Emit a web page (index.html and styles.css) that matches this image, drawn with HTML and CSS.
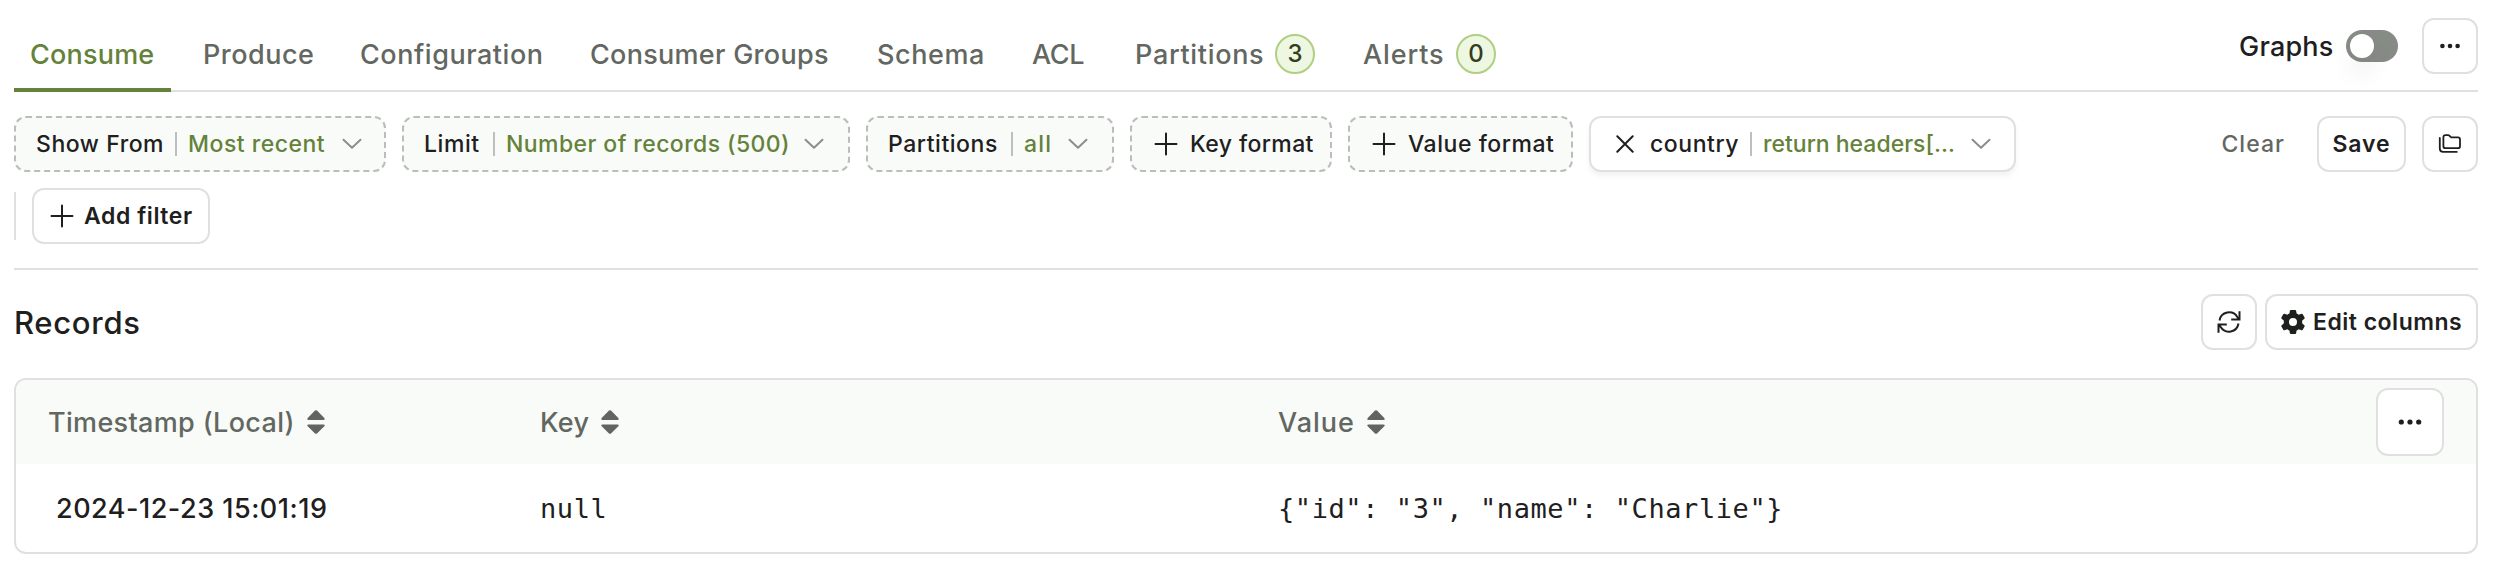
FILE: index.html
```
<!DOCTYPE html>
<html lang="en">
<head>
<meta charset="utf-8">
<title>Records</title>
<link rel="stylesheet" href="styles.css">
</head>
<body>
<svg width="0" height="0" class="defs" aria-hidden="true">
  <symbol id="chevron" viewBox="0 0 20 12"><path d="M1.5 1.8 L10 9.8 L18.5 1.8" fill="none" stroke="currentColor" stroke-width="2" stroke-linecap="round" stroke-linejoin="round"/></symbol>
  <symbol id="plus" viewBox="0 0 24 24"><path d="M12 1.5V22.5M1.5 12H22.5" fill="none" stroke="currentColor" stroke-width="2" stroke-linecap="round"/></symbol>
  <symbol id="sort" viewBox="0 0 18 24"><path d="M8 .6Q9 -.3 10 .6L17.3 8Q18.5 10 16.4 10H1.6Q-.5 10 .7 8ZM8 23.4Q9 24.3 10 23.4L17.3 16.2Q18.5 14.4 16.4 14.4H1.6Q-.5 14.4 .7 16.2Z" fill="currentColor"/></symbol>
</svg>
<header class="topbar">
  <nav class="tabs">
    <a class="tab active t1">Consume</a>
    <a class="tab t2">Produce</a>
    <a class="tab t3">Configuration</a>
    <a class="tab t4">Consumer Groups</a>
    <a class="tab t5">Schema</a>
    <a class="tab t6">ACL</a>
    <a class="tab t7"><span>Partitions</span><b class="badge">3</b></a>
    <a class="tab t8"><span>Alerts</span><b class="badge">0</b></a>
  </nav>
  <div class="top-actions">
    <span class="graphs">Graphs</span>
    <span class="toggle"><i class="knob"></i></span>
    <button class="btn square"><svg width="24" height="24" viewBox="0 0 24 24"><circle cx="4.4" cy="12" r="2.3"/><circle cx="12" cy="12" r="2.3"/><circle cx="19.6" cy="12" r="2.3"/></svg></button>
  </div>
</header>

<section class="filters">
  <div class="filter-row">
    <div class="chip c1"><span class="label">Show From</span><i class="sep"></i><span class="value">Most recent</span><svg class="chev"><use href="#chevron"/></svg></div>
    <div class="chip c2"><span class="label">Limit</span><i class="sep"></i><span class="value">Number of records (500)</span><svg class="chev"><use href="#chevron"/></svg></div>
    <div class="chip c3"><span class="label">Partitions</span><i class="sep"></i><span class="value">all</span><svg class="chev"><use href="#chevron"/></svg></div>
    <div class="chip add c4"><svg class="plus"><use href="#plus"/></svg><span>Key format</span></div>
    <div class="chip add c5"><svg class="plus"><use href="#plus"/></svg><span>Value format</span></div>
    <div class="chip solid c6"><svg class="close" viewBox="0 0 18 18"><path d="M1.3 1.3L16.7 16.7M16.7 1.3L1.3 16.7"/></svg><span class="label">country</span><i class="sep"></i><span class="value">return headers[…</span><svg class="chev"><use href="#chevron"/></svg></div>
    <div class="filter-actions">
      <span class="clear">Clear</span>
      <button class="btn save">Save</button>
      <button class="btn square"><svg width="24" height="24" viewBox="0 0 24 24" class="stroke"><path d="M5.4 5.2Q5.4 3.2 7.4 3.2H10.2Q11 3.2 11.6 3.8L12.6 4.8Q13.2 5.4 14 5.4H20Q22 5.4 22 7.4V14.2Q22 16.2 20 16.2H7.4Q5.4 16.2 5.4 14.2Z"/><path d="M1.8 6V16.6Q1.8 19.9 5.1 19.9H18.8"/></svg></button>
    </div>
  </div>
  <div class="filter-row second">
    <i class="bar"></i>
    <button class="btn add-filter"><svg class="plus"><use href="#plus"/></svg><span>Add filter</span></button>
  </div>
</section>

<section class="records-head">
  <h2>Records</h2>
  <div class="records-actions">
    <button class="btn square"><svg width="24" height="24" viewBox="-12 -12 24 24" class="stroke refresh"><path d="M-9.5 -1.5A9.7 9.7 0 0 1 8.3 -5L10.2 -2.6M10.5 -10.8V-2.4H2.2M9.5 1.5A9.7 9.7 0 0 1 -8.3 5L-10.2 2.6M-10.5 10.8V2.4H-2.2"/></svg></button>
    <button class="btn edit"><svg width="24" height="24" viewBox="-12 -12 24 24"><path fill-rule="evenodd" d="M-2.2 -12H2.2Q3 -12 3.1 -11.2L3.6 -8.4Q4.8 -7.9 5.7 -7.2L8.5 -8.2Q9.3 -8.4 9.7 -7.7L11.6 -4.4Q11.9 -3.7 11.3 -3.2L9.1 -1.3Q9.3 0 9.1 1.3L11.3 3.2Q11.9 3.7 11.6 4.4L9.7 7.7Q9.3 8.4 8.5 8.2L5.7 7.2Q4.8 7.9 3.6 8.4L3.1 11.2Q3 12 2.2 12H-2.2Q-3 12 -3.1 11.2L-3.6 8.4Q-4.8 7.9 -5.7 7.2L-8.5 8.2Q-9.3 8.4 -9.7 7.7L-11.6 4.4Q-11.9 3.7 -11.3 3.2L-9.1 1.3Q-9.3 0 -9.1 -1.3L-11.3 -3.2Q-11.9 -3.7 -11.6 -4.4L-9.7 -7.7Q-9.3 -8.4 -8.5 -8.2L-5.7 -7.2Q-4.8 -7.9 -3.6 -8.4L-3.1 -11.2Q-3 -12 -2.2 -12ZM0 -4A4 4 0 1 0 0 4A4 4 0 1 0 0 -4Z"/></svg><span>Edit columns</span></button>
  </div>
</section>

<section class="table">
  <div class="row head">
    <div class="cell"><span class="h1">Timestamp (Local)</span><svg class="sort"><use href="#sort"/></svg></div>
    <div class="cell"><span class="h2">Key</span><svg class="sort"><use href="#sort"/></svg></div>
    <div class="cell"><span class="h3">Value</span><svg class="sort"><use href="#sort"/></svg></div>
    <button class="btn more"><svg width="24" height="24" viewBox="0 0 24 24"><circle cx="3.3" cy="12" r="2.6"/><circle cx="12" cy="12" r="2.6"/><circle cx="20.7" cy="12" r="2.6"/></svg></button>
  </div>
  <div class="row body">
    <div class="cell date">2024-12-23 15:01:19</div>
    <div class="cell mono">null</div>
    <div class="cell mono">{"id": "3", "name": "Charlie"}</div>
  </div>
</section>
</body>
</html>
```
FILE: styles.css
```
* { box-sizing: border-box; }
body {
  margin: 0;
  padding: 0 16px 0 14px;
  background: #fff;
  color: #1e201e;
  font-family: Inter, "Liberation Sans", sans-serif;
  font-size: 23px;
  font-weight: 500;
  white-space: nowrap;
  font-feature-settings: "calt" 0;
}
svg { display: block; flex: none; fill: currentColor; }
.defs { position: absolute; }
.stroke { fill: none; stroke: currentColor; stroke-width: 1.8; stroke-linecap: round; stroke-linejoin: round; }
.refresh { stroke-width: 2; stroke-linecap: butt; stroke-linejoin: miter; }

.topbar { display: flex; justify-content: space-between; height: 92px; padding-top: 18px; border-bottom: 2px solid #e0e0e0; }
.tabs { display: grid; grid-template-columns: 157px 141px 214px 271px 139px 87px 212px 165px; column-gap: 16px; height: 74px; font-size: 27px; color: #636761; }
.tab { display: flex; align-items: center; justify-content: space-between; padding: 2px 16px 0; border-bottom: 4px solid transparent; }
.tab.active { color: #64823a; border-color: #64823a; }
.t1 { letter-spacing: .2px; }
.t2 { letter-spacing: .5px; }
.t3 { letter-spacing: .53px; }
.t4 { letter-spacing: .28px; }
.t5 { letter-spacing: .6px; }
.t6 { letter-spacing: -.3px; }
.t7 { letter-spacing: .68px; }
.t8 { letter-spacing: .87px; }
.badge { width: 40px; height: 40px; border: 2px solid #b0cf82; border-radius: 50%; background: #eef7e1; color: #333d20; font-size: 24px; font-weight: 500; line-height: 36px; text-align: center; letter-spacing: 0; }

.top-actions { display: flex; align-items: center; height: 56px; }
.graphs { width: 107px; font-size: 27px; letter-spacing: .2px; }
.toggle { width: 52px; height: 32px; margin-right: 24px; padding: 4px; border-radius: 16px; background: #868c85; }
.knob { display: block; width: 24px; height: 24px; border-radius: 50%; background: #fff; box-shadow: 0 16px 24px rgba(0, 0, 0, .07); }

.btn { display: flex; align-items: center; justify-content: center; height: 56px; margin: 0; padding: 0; border: 2px solid #e0e0e0; border-radius: 12px; background: #fff; color: #1e201e; font: 600 23px Inter, "Liberation Sans", sans-serif; }
.square { width: 56px; }

.filters { padding: 24px 0; border-bottom: 2px solid #e0e0e0; }
.filter-row { display: flex; gap: 16px; height: 56px; }
.filter-row.second { margin-top: 16px; align-items: center; }
.chip { display: flex; align-items: center; height: 56px; padding-left: 20px; border: 2px dashed #bbbdba; border-radius: 12px; background: #f9fbf9; }
.chip.solid { padding-left: 25px; border: 2px solid #e0e0e0; background: #fff; box-shadow: 0 4px 5px rgba(0, 0, 0, .05); }
.sep { width: 2px; height: 24px; margin-right: 11px; background: #bdbfbc; }
.value { color: #64823a; letter-spacing: .5px; }
.label { letter-spacing: .55px; }
.chev { width: 20px; height: 12px; color: #8a8f89; }
.plus { width: 24px; height: 24px; }
.close { width: 18px; height: 18px; margin-right: 16px; fill: none; stroke: currentColor; stroke-width: 2; stroke-linecap: round; }
.c1 { width: 372px; }
.c1 .label { width: 139px; }
.c1 .value { width: 154px; }
.c2 { width: 448px; }
.c2 .label { width: 69px; }
.c2 .value { width: 298px; letter-spacing: .42px; }
.c3 { width: 248px; }
.c3 .label { width: 123px; }
.c3 .value { width: 44px; letter-spacing: 1.2px; }
.c4 { width: 202px; letter-spacing: .4px; }
.c5 { width: 225px; letter-spacing: .54px; }
.c6 { width: 427px; }
.c6 .label { width: 100px; }
.c6 .value { width: 208px; letter-spacing: 0; }
.chip.add { padding-left: 22px; gap: 12px; }
.filter-actions { display: flex; align-items: center; gap: 16px; margin-left: auto; }
.clear { margin-right: 16px; color: #636761; letter-spacing: 1.05px; }
.save { width: 89px; letter-spacing: .9px; }
.bar { width: 2px; height: 48px; background: #e0e0e0; }
.add-filter { width: 178px; gap: 10px; justify-content: flex-start; padding-left: 16px; letter-spacing: .57px; }

.records-head { display: flex; align-items: center; justify-content: space-between; height: 108px; padding-bottom: 4px; }
.records-head h2 { margin: 0; font-size: 31px; font-weight: 500; letter-spacing: .7px; }
.records-actions { display: flex; gap: 8px; }
.edit { width: 213px; gap: 8px; justify-content: flex-start; padding-left: 14px; letter-spacing: .5px; }

.table { border: 2px solid #e0e0e0; border-radius: 12px; height: 176px; overflow: hidden; font-size: 27px; }
.row { display: grid; grid-template-columns: 492px 738px 1fr 68px; align-items: center; padding: 0 32px; }
.head { height: 84px; background: #f9fbf8; color: #636761; font-weight: 450; }
.body { height: 88px; }
.cell { display: flex; align-items: center; }
.sort { width: 18px; height: 24px; color: #60655f; }
.h1 { width: 259px; letter-spacing: .33px; }
.h2 { width: 61px; letter-spacing: .36px; }
.h3 { width: 89px; letter-spacing: 1px; }
.date { padding-left: 8px; letter-spacing: .5px; }
.mono { font-family: "DejaVu Sans Mono", monospace; font-weight: 400; letter-spacing: .58px; }
.more { width: 68px; height: 68px; }
```
